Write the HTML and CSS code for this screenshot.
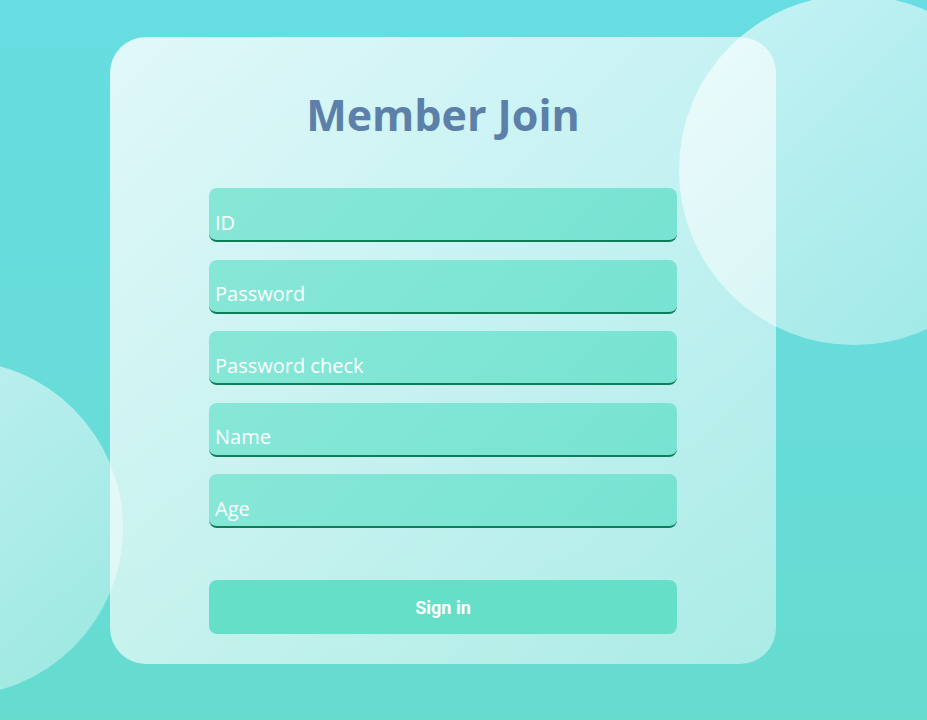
FILE: index.html
```html
<!DOCTYPE html>
<html lang="en">
<head>
<meta charset="utf-8">
<title>Member Join</title>
<link rel="stylesheet" href="styles.css">
</head>
<body>
<div class="backdrop">
  <div class="circle circle-right"></div>
  <div class="circle circle-left"></div>
</div>
<main class="page">
  <form class="card">
    <h1 class="title">Member Join</h1>
    <div class="fields">
      <input class="field" type="text" placeholder="ID">
      <input class="field" type="password" placeholder="Password">
      <input class="field" type="password" placeholder="Password check">
      <input class="field" type="text" placeholder="Name">
      <input class="field" type="text" placeholder="Age">
    </div>
    <button class="submit" type="button">Sign in</button>
  </form>
</main>
</body>
</html>
```
FILE: styles.css
```css
* { box-sizing: border-box; }
html, body { margin: 0; width: 927px; height: 720px; overflow: hidden; }
body {
  position: relative;
  background: linear-gradient(180deg, #68dde2 0%, #67dcd8 60%, #66dccf 100%);
  font-family: "Open Sans", "Noto Sans CJK KR", sans-serif;
}
.backdrop {
  position: absolute;
  inset: 0;
  overflow: hidden;
}
.circle {
  position: absolute;
  border-radius: 50%;
  background: linear-gradient(135deg, rgba(255,255,255,0.85) 0%, rgba(255,255,255,0.45) 100%);
  opacity: 0.75;
}
.circle-right {
  left: 679px;
  top: -5px;
  width: 350px;
  height: 350px;
}
.circle-left {
  left: -213px;
  top: 360px;
  width: 336px;
  height: 336px;
}
.page {
  position: relative;
  padding: 37px 0 0 110px;
  display: flex;
}
.card {
  width: 666px;
  height: 627px;
  border-radius: 36px;
  background: linear-gradient(135deg, rgba(255,255,255,0.8) 0%, rgba(255,255,255,0.45) 100%);
  display: flex;
  flex-direction: column;
  align-items: center;
  padding-top: 50px;
}
.title {
  margin: 0;
  font-size: 43px;
  line-height: 56px;
  font-weight: 700;
  color: #5c80aa;
}
.fields {
  margin-top: 45px;
  display: flex;
  flex-direction: column;
  gap: 17.5px;
}
.field {
  width: 468px;
  height: 54px;
  border: none;
  border-bottom: 2px solid #0d7e58;
  border-radius: 8px;
  background: linear-gradient(135deg, #87e7d7 0%, #78e3d2 100%);
  padding: 16px 6px 0;
  font-family: inherit;
  font-size: 20px;
  color: #fff;
  outline: none;
}
.field::placeholder { color: #ffffff; opacity: 1; }
.submit {
  margin-top: 52px;
  width: 468px;
  height: 54px;
  border: none;
  border-radius: 8px;
  background: #66dfc9;
  color: #fff;
  font-family: Roboto, "Liberation Sans", sans-serif;
  font-weight: 700;
  font-size: 18px;
}
```
